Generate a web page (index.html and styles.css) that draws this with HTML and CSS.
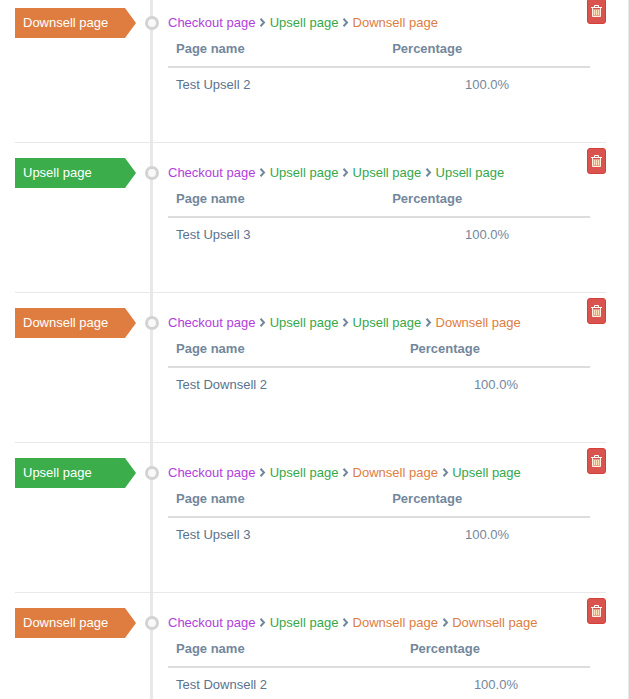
FILE: index.html
```
<!DOCTYPE html>
<html lang="en">
<head>
    <meta charset="UTF-8">
    <meta name="viewport" content="width=device-width, initial-scale=1.0">
    <title>Funnel pages</title>
    <link rel="stylesheet" href="styles.css">
    <script src="script.js" defer></script>
</head>
<body>
    <svg class="sprite" aria-hidden="true">
        <symbol id="chevron" viewBox="0 0 7 9">
            <path d="M1.5 0.8 L5 4.5 L1.5 8.2" fill="none" stroke="currentColor" stroke-width="2"/>
        </symbol>
        <symbol id="trash" viewBox="0 0 11 12">
            <path d="M3.5 2V0.5h4V2" fill="none" stroke="#fff" stroke-width="1"/>
            <path d="M0 2h11v1H0z" fill="#fff"/>
            <path d="M2 4h7v7H2z" fill="#e9a08a"/>
            <path d="M1.5 3v8.5h8V3" fill="none" stroke="#fff2e4" stroke-width="1"/>
            <path d="M3.5 5v5M5.5 5v5M7.5 5v5" stroke="#ffe2bd" stroke-width="1"/>
        </symbol>
    </svg>
    <div class="panel">
        <ul class="timeline" id="timeline"></ul>
    </div>
</body>
</html>
```
FILE: styles.css
```
/* General Styles */
body {
    margin: 0;
    height: 100vh;
    overflow: hidden;
    font-family: "Liberation Sans", Arial, sans-serif;
    font-size: 13px;
    line-height: 18px;
    color: #73879c;
    background: #fff;
}

.sprite {
    display: none;
}

.panel {
    min-height: 100vh;
    box-sizing: border-box;
    padding: 0 22px 0 15px;
    border-right: 1px solid #e6e9ed;
}

/* Timeline */
.timeline {
    list-style: none;
    margin: -7px 0 0;
    padding: 0;
}

.step {
    position: relative;
    display: flex;
    align-items: stretch;
    height: 149px;
    border-bottom: 1px solid #e8e8e8;
}

.step-label {
    flex: 0 0 135px;
    padding-top: 15px;
}

.tag {
    width: 121px;
    box-sizing: border-box;
    padding: 6px 8px;
    color: #fff;
    clip-path: polygon(0 0, 110px 0, 100% 50%, 110px 100%, 0 100%);
}

.tag.upsell {
    background: #3bad4b;
}

.tag.downsell {
    background: #de7d3f;
}

.step-body {
    flex: 1;
    position: relative;
    margin-bottom: -1px;
    padding: 21px 16px 0 15px;
    border-left: 3px solid #e8e8e8;
}

/* Dot on the line */
.step-body::before {
    content: "";
    position: absolute;
    top: 23px;
    left: -8px;
    width: 8px;
    height: 8px;
    border: 3px solid #d2d3d2;
    border-radius: 50%;
    background: #f9f9f9;
}

/* Path */
.path {
    white-space: nowrap;
}

.path .checkout {
    color: #b23edb;
}

.path .upsell {
    color: #36a849;
}

.path .downsell {
    color: #de7d3f;
}

.path svg {
    width: 7px;
    height: 9px;
}

/* Pages table */
.pages {
    width: 100%;
    border-collapse: separate;
    border-spacing: 0;
}

.pages th,
.pages td {
    padding: 8px;
}

.pages th {
    text-align: left;
    border-bottom: 2px solid #ddd;
}

.pages td:first-child {
    color: #5a738e;
}

.pages td:last-child {
    text-align: center;
}

/* Delete button */
.delete {
    position: absolute;
    top: 5px;
    right: 0;
    width: 19px;
    height: 26px;
    padding: 0;
    display: flex;
    align-items: center;
    justify-content: center;
    background: #d9534f;
    border: 1px solid #d43f3a;
    border-radius: 3px;
    cursor: pointer;
}

.delete svg {
    width: 11px;
    height: 12px;
}

.delete:hover {
    background: #c9302c;
}
```
FILE: script.js
```
const labels = {
    checkout: "Checkout page",
    upsell: "Upsell page",
    downsell: "Downsell page"
};

const steps = [
    { path: ["checkout", "upsell", "downsell"], page: "Test Upsell 2" },
    { path: ["checkout", "upsell", "upsell", "upsell"], page: "Test Upsell 3" },
    { path: ["checkout", "upsell", "upsell", "downsell"], page: "Test Downsell 2" },
    { path: ["checkout", "upsell", "downsell", "upsell"], page: "Test Upsell 3" },
    { path: ["checkout", "upsell", "downsell", "downsell"], page: "Test Downsell 2" }
];

const arrow = ' <svg aria-hidden="true"><use href="#chevron"/></svg> ';

document.getElementById("timeline").innerHTML = steps.map((step) => {
    const type = step.path[step.path.length - 1];
    const path = step.path.map((p) => `<span class="${p}">${labels[p]}</span>`).join(arrow);
    return `
        <li class="step">
            <div class="step-label"><div class="tag ${type}">${labels[type]}</div></div>
            <div class="step-body">
                <div class="path">${path}</div>
                <table class="pages">
                    <thead><tr><th>Page name</th><th>Percentage</th></tr></thead>
                    <tbody><tr><td>${step.page}</td><td>100.0%</td></tr></tbody>
                </table>
            </div>
            <button class="delete" type="button" aria-label="Delete"><svg aria-hidden="true"><use href="#trash"/></svg></button>
        </li>`;
}).join("");
```
